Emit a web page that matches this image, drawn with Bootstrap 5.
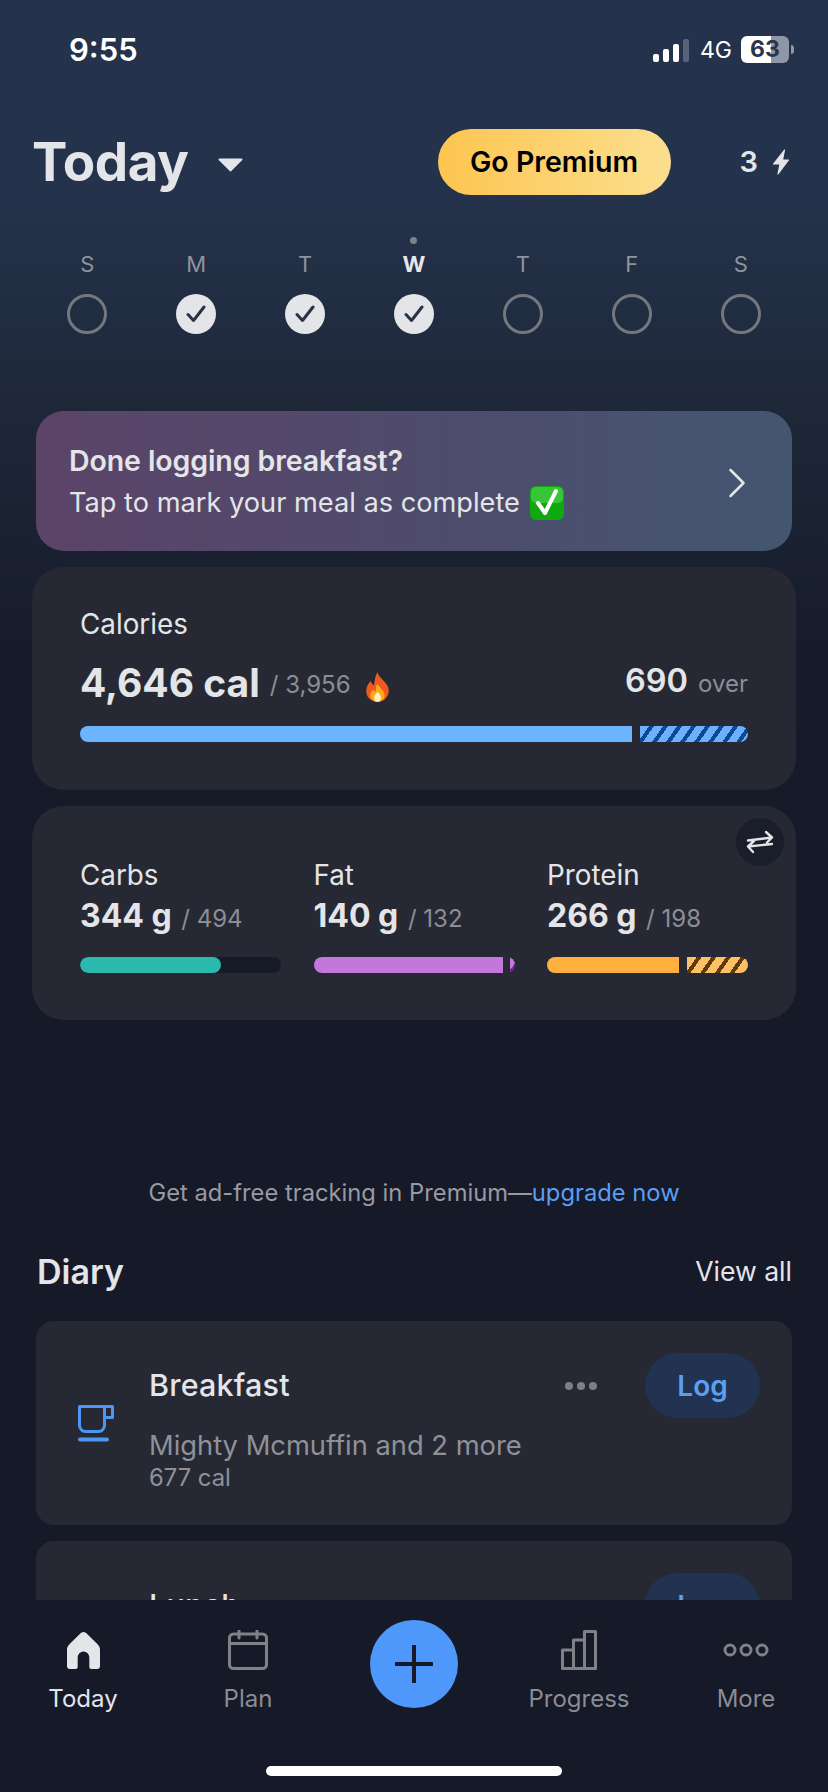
<!DOCTYPE html>
<html lang="en">
<head>
<meta charset="utf-8">
<title>Today</title>
<link href="https://cdn.jsdelivr.net/npm/bootstrap@5.3.0/dist/css/bootstrap.min.css" rel="stylesheet">
<style>
html,body{margin:0;background:#151928}
body{font-family:Inter,"Liberation Sans",sans-serif;color:#e4e5e8;width:828px;height:1792px;overflow:hidden}
.screen{width:828px;height:1792px;background:linear-gradient(180deg,#24324b 0,#24324b 200px,#1e2839 400px,#171c2c 640px,#151928 900px)}
.scroller{height:1600px;overflow:hidden}
.statusbar{height:99px;padding:30px 34px 0 69px}
.clock{font-size:31px;font-weight:600;color:#fff;line-height:40px}
.sig{width:37px;height:24px;gap:4px;margin-right:2px}
.sig i{display:block;width:6px;background:#fff;border-radius:2px}
.sig i.off{background:#566479}
.net{font-size:23px;color:#fff;margin:0 9px 0 8px;font-weight:400;line-height:24px}
.batt{width:48px;height:27px;border-radius:6px;background:linear-gradient(90deg,#fff 0,#fff 30px,#8f96a6 30px);color:#2a364e;font-size:23px;font-weight:700;line-height:27px;text-align:center}
.batt-tip{width:3px;height:9px;background:#8f96a6;border-radius:0 3px 3px 0;margin-left:2px}
.topbar{height:96px;padding:30px 38px 0 32px}
.ttl{font-size:53px;font-weight:700;line-height:66px;letter-spacing:-.5px;color:#e4e5e8}
.caret-ico{margin-left:30px;margin-top:4px}
.premium{width:233px;height:66px;border-radius:33px;border:0;padding:0;background:linear-gradient(90deg,#fdc550,#fbdf8f);color:#000;font-size:28.5px;font-weight:600;margin-left:auto;margin-right:69px}
.streak{font-size:29px;font-weight:600;gap:14px}
.week{padding:42px 33px 0;height:216px}
.daycol{width:108.5px}
.today-dot{width:7px;height:7px;border-radius:50%;background:#7f8389;margin-bottom:3px}
.no-dot{height:10px}
.dayname{font-size:22px;line-height:34px;color:#8f939b;height:34px}
.dayname.on{color:#e6e7ea;font-weight:700}
.ring{width:40px;height:40px;border-radius:50%;border:3px solid #74777d;margin-top:13px}
.ring.done{border:0;background:#e4e5e8}
.promo{margin:0 36px;height:140px;border-radius:28px;background:linear-gradient(90deg,#5b4468,#4f4b6c 50%,#43566f);padding:4px 46px 0 33px;color:#e4e5e8;font-size:27.2px;border:0}
.promo b{font-weight:600;font-size:28.5px;line-height:40px;display:block;letter-spacing:-.1px}
.promo span{line-height:44px;display:flex;align-items:center;gap:10px}
.panel{margin:16px 32px 0;background:#262933;border-radius:32px;border:0;color:#e4e5e8;position:relative}
.cal-panel{height:223px;padding:39px 48px 0}
.lbl{font-size:27.8px;line-height:36px;color:#e4e5e8}
.bignum{font-size:39px;font-weight:700;line-height:52px}
.sub{font-size:24px;color:#8b8e96;font-weight:400}
.fire{margin-left:14px}
.overnum{font-size:32.5px;font-weight:600;margin-right:10px}
.track{height:16px;border-radius:8px;overflow:hidden;background:#171b27;gap:8px}
.solid{height:100%}
.hatch{height:100%;flex:1;min-width:0}
.h-blue{background:repeating-linear-gradient(125deg,#6cb0ff 0 7.5px,#0c4a90 7.5px 11.500px)}
.h-purple{background:repeating-linear-gradient(125deg,#c476dd 0 7.5px,#6c2f86 7.5px 11.500px)}
.h-orange{background:repeating-linear-gradient(125deg,#fdc066 0 8px,#5f3a0c 8px 12px)}
.macro-panel{height:214px;padding:51px 48px 0}
.macrocol{width:201px}
.val{font-size:32px;font-weight:700;line-height:44px;margin-top:1px}
.val .sub{margin-left:2px}
.macrocol .lbl{line-height:36px}
.macrocol .track{margin-top:16px}
.swap{position:absolute;right:12px;top:12px;width:48px;height:48px;border-radius:50%;background:#1a1d2a}
.adline{margin-top:153px;height:40px;text-align:center;font-size:23.75px;line-height:40px;color:#989aa1}
.adline a{color:#5a9ff0;text-decoration:none}
.diaryhead{margin:29px 36px 0 37px;height:60px}
.diaryhead h2{font-size:34px;font-weight:600;margin:0;color:#e4e5e8}
.viewall{font-size:26.6px;color:#e4e5e8}
.meal{margin:0 36px 16px;height:204px;border-radius:18px;border:0;background:#262933;color:#e4e5e8;position:relative;flex-direction:row;padding:32px 32px 0 42px}
.cup{width:36px;margin-top:52px;flex:none}
.mealbody{margin-left:35px;flex:1}
.mealname{font-size:30.5px;font-weight:500;line-height:44px;height:65px;margin-top:10px;color:#e4e5e8;letter-spacing:.2px}
.mealfoods{font-size:27.3px;line-height:36px;color:#8f9198}
.mealcal{font-size:23.8px;line-height:28px;color:#8f9198}
.more-dots{width:32px;height:8px;margin-right:48px;margin-top:29px;gap:4px}
.more-dots i{width:8px;height:8px;border-radius:50%;background:#7c7f87;display:block}
.logbtn{width:115px;height:65px;border-radius:33px;border:0;background:#213350;color:#5a9ff0;font-size:28px;font-weight:600;padding:0}
.tabbar{height:192px;background:#151928;position:relative;padding:0}
.tabs{height:118px;align-items:flex-start}
.tab{flex:none;text-align:center;color:#8a8c92;font-size:24px;line-height:32px}
.tab.active{color:#e4e5e8}
.tabicon{height:44px;margin-top:28px;margin-bottom:11px;display:flex;justify-content:center;align-items:center}
.addbtn{width:88px;height:88px;border-radius:50%;border:0;background:#4e97fb;padding:0;margin-top:20px}
.homebar{position:absolute;left:266px;bottom:16px;width:296px;height:10px;border-radius:5px;background:#fff}
</style>
</head>
<body>
<div class="screen d-flex flex-column">
  <div class="scroller">
    <div class="statusbar d-flex justify-content-between align-items-start">
      <div class="clock">9:55</div>
      <div class="d-flex align-items-center" style="margin-top:6px">
        <div class="sig d-flex align-items-end"><i style="height:8px"></i><i style="height:13px"></i><i style="height:18px"></i><i class="off" style="height:23px"></i></div>
        <div class="net">4G</div>
        <div class="batt">63</div>
        <div class="batt-tip"></div>
      </div>
    </div>

    <div class="topbar d-flex align-items-center">
      <div class="ttl">Today</div>
      <svg class="caret-ico" width="25" height="15" viewBox="0 0 25 15"><path d="M1.5 1.5h22a1 1 0 0 1 .8 1.6L13.3 14a1 1 0 0 1-1.6 0L.7 3.1a1 1 0 0 1 .8-1.6z" fill="#e4e5e8"/></svg>
      <button class="btn premium">Go Premium</button>
      <div class="streak d-flex align-items-center"><span>3</span>
        <svg width="18" height="26" viewBox="0 0 18 26"><path d="M12.500 1 1.500 15H8L6 25 16.500 11H10.500z" fill="#e4e5e8" stroke="#e4e5e8" stroke-width="1.200" stroke-linejoin="round"/></svg>
      </div>
    </div>

    <div class="week d-flex justify-content-between">
      <div class="daycol d-flex flex-column align-items-center"><div class="no-dot"></div><div class="dayname">S</div><div class="ring"></div></div>
      <div class="daycol d-flex flex-column align-items-center"><div class="no-dot"></div><div class="dayname">M</div><div class="ring done d-flex align-items-center justify-content-center"><svg width="20" height="18" viewBox="0 0 20 18"><path d="M2 9.500 7.500 15.500 18 2" fill="none" stroke="#2a3346" stroke-width="3" stroke-linecap="round" stroke-linejoin="round"/></svg></div></div>
      <div class="daycol d-flex flex-column align-items-center"><div class="no-dot"></div><div class="dayname">T</div><div class="ring done d-flex align-items-center justify-content-center"><svg width="20" height="18" viewBox="0 0 20 18"><path d="M2 9.500 7.500 15.500 18 2" fill="none" stroke="#2a3346" stroke-width="3" stroke-linecap="round" stroke-linejoin="round"/></svg></div></div>
      <div class="daycol d-flex flex-column align-items-center"><div class="today-dot"></div><div class="dayname on">W</div><div class="ring done d-flex align-items-center justify-content-center"><svg width="20" height="18" viewBox="0 0 20 18"><path d="M2 9.500 7.500 15.500 18 2" fill="none" stroke="#2a3346" stroke-width="3" stroke-linecap="round" stroke-linejoin="round"/></svg></div></div>
      <div class="daycol d-flex flex-column align-items-center"><div class="no-dot"></div><div class="dayname">T</div><div class="ring"></div></div>
      <div class="daycol d-flex flex-column align-items-center"><div class="no-dot"></div><div class="dayname">F</div><div class="ring"></div></div>
      <div class="daycol d-flex flex-column align-items-center"><div class="no-dot"></div><div class="dayname">S</div><div class="ring"></div></div>
    </div>

    <div class="card promo flex-row align-items-center justify-content-between">
      <div>
        <b>Done logging breakfast?</b>
        <span>Tap to mark your meal as complete
          <svg width="34" height="34" viewBox="0 0 34 34"><rect x="0" y="0" width="34" height="34" rx="6" fill="#0fa80f"/><rect x="1" y="1" width="32" height="16" rx="5" fill="#39c53a"/><path d="M8 17l7 10L26 5" fill="none" stroke="#fff" stroke-width="4" stroke-linecap="round" stroke-linejoin="round"/></svg>
        </span>
      </div>
      <svg width="18" height="30" viewBox="0 0 18 30"><path d="M2.500 2 15.500 15 2.500 28" fill="none" stroke="#e4e5e8" stroke-width="2.500" stroke-linecap="round" stroke-linejoin="round"/></svg>
    </div>

    <div class="card panel cal-panel">
      <div class="lbl">Calories</div>
      <div class="d-flex justify-content-between align-items-start" style="margin-top:15px">
        <div class="d-flex align-items-end"><span class="bignum">4,646 cal</span><span class="sub" style="margin:0 0 6px 10px">/ 3,956</span>
          <svg class="fire" width="25" height="30" viewBox="0 0 28 34" style="margin-bottom:7px"><path d="M14 0c1 6 9 10 12 17 3 8-3 17-12 17S-1 26 2 17c1-3 3-5 4-7 1 3 2 4 4 5 1-5 1-10 4-15z" fill="#ec5a1f"/><path d="M14 13c1 4 7 7 8 12 1 5-3 9-8 9s-9-4-8-9c1-3 2-4 3-5 1 1 2 2 3 2 0-3 0-6 2-9z" fill="#fba91f"/><path d="M14 22c1 2 4 4 4 7s-2 5-4 5-4-2-4-5 3-4 4-7z" fill="#fff1b8"/></svg>
        </div>
        <div class="d-flex align-items-baseline"><span class="overnum">690</span><span class="sub">over</span></div>
      </div>
      <div class="track d-flex" style="margin-top:17px;background:none">
        <div class="solid" style="width:552px;background:#6cb4ff"></div>
        <div class="hatch h-blue"></div>
      </div>
    </div>

    <div class="card panel macro-panel">
      <div class="swap d-flex align-items-center justify-content-center">
        <svg width="30" height="24" viewBox="0 0 30 24"><path d="M3 10.500 27 7.500M21 2l6 5.500-5 5M27 14 3 16.500M9 11l-6 5.500 5 5.500" fill="none" stroke="#e4e5e8" stroke-width="2.400" stroke-linecap="round" stroke-linejoin="round"/></svg>
      </div>
      <div class="d-flex justify-content-between">
        <div class="macrocol">
          <div class="lbl">Carbs</div>
          <div class="val">344 g <span class="sub">/ 494</span></div>
          <div class="track d-flex" style="gap:0"><div class="solid" style="width:70%;background:#2bb8ad;border-radius:8px"></div></div>
        </div>
        <div class="macrocol">
          <div class="lbl">Fat</div>
          <div class="val">140 g <span class="sub">/ 132</span></div>
          <div class="track d-flex" style="background:none;gap:7px"><div class="solid" style="width:189px;background:#c476dd"></div><div class="hatch h-purple"></div></div>
        </div>
        <div class="macrocol">
          <div class="lbl">Protein</div>
          <div class="val">266 g <span class="sub">/ 198</span></div>
          <div class="track d-flex" style="background:none"><div class="solid" style="width:132px;background:#ffb03f"></div><div class="hatch h-orange"></div></div>
        </div>
      </div>
    </div>

    <div class="adline">Get ad-free tracking in Premium—<a href="#">upgrade now</a></div>

    <div class="diaryhead d-flex justify-content-between align-items-center">
      <h2>Diary</h2><span class="viewall">View all</span>
    </div>

    <div class="card meal" style="margin-top:19px">
      <svg class="cup" width="36" height="37" viewBox="0 0 36 37"><path d="M1.500 1.500h25v19a6 6 0 0 1-6 6H7.500a6 6 0 0 1-6-6zM26.500 1.500h8v11h-8" fill="none" stroke="#4e97f0" stroke-width="3" stroke-linejoin="round"/><rect x="0" y="32.500" width="31" height="4" rx="2" fill="#4e97f0"/></svg>
      <div class="mealbody">
        <div class="mealname">Breakfast</div>
        <div class="mealfoods">Mighty Mcmuffin and 2 more</div>
        <div class="mealcal">677 cal</div>
      </div>
      <div class="more-dots d-flex"><i></i><i></i><i></i></div>
      <button class="btn logbtn">Log</button>
    </div>
    <div class="card meal">
      <svg class="cup" width="36" height="37" viewBox="0 0 36 37"></svg>
      <div class="mealbody"><div class="mealname">Lunch</div></div>
      <button class="btn logbtn">Log</button>
    </div>
  </div>

  <nav class="tabbar">
    <div class="tabs d-flex">
      <div class="tab active" style="width:166px">
        <div class="tabicon"><svg width="33" height="37" viewBox="0 0 34 38"><path d="M17 0c1.500 0 2.500.8 3.500 1.800L31 12c2 2 3 3.500 3 6v17a3 3 0 0 1-3 3h-6a2 2 0 0 1-2-2V26a6 6 0 0 0-12 0v10a2 2 0 0 1-2 2H3a3 3 0 0 1-3-3V18c0-2.500 1-4 3-6L13.500 1.800C14.500.8 15.500 0 17 0z" fill="#e4e5e8"/></svg></div>
        Today
      </div>
      <div class="tab" style="width:164px">
        <div class="tabicon"><svg width="40" height="40" viewBox="0 0 40 40"><rect x="1.500" y="4" width="37" height="34.500" rx="4" fill="none" stroke="#7f8187" stroke-width="3"/><path d="M1.500 13.500h37M11 1v7M29 1v7" fill="none" stroke="#7f8187" stroke-width="3" stroke-linecap="round"/></svg></div>
        Plan
      </div>
      <div class="d-flex justify-content-center" style="width:168px"><button class="btn addbtn d-flex align-items-center justify-content-center" aria-label="Add">
        <svg width="38" height="38" viewBox="0 0 38 38"><path d="M19 1v36M1 19h36" stroke="#151928" stroke-width="4" stroke-linecap="round"/></svg></button></div>
      <div class="tab" style="width:162px">
        <div class="tabicon"><svg width="36" height="40" viewBox="0 0 36 40"><path d="M1.500 38.500V20h11v18.500zM12.500 38.500V10h11v28.500zM23.500 38.500V1.500h11v37z" fill="none" stroke="#7f8187" stroke-width="3" stroke-linejoin="round"/></svg></div>
        Progress
      </div>
      <div class="tab" style="width:168px;padding-left:4px">
        <div class="tabicon"><svg width="46" height="14" viewBox="0 0 46 14"><g fill="none" stroke="#7f8187" stroke-width="3"><circle cx="7" cy="7" r="5"/><circle cx="23" cy="7" r="5"/><circle cx="39" cy="7" r="5"/></g></svg></div>
        More
      </div>
    </div>
    <div class="homebar"></div>
  </nav>
</div>
<script src="https://cdn.jsdelivr.net/npm/bootstrap@5.3.0/dist/js/bootstrap.bundle.min.js"></script>
</body>
</html>
